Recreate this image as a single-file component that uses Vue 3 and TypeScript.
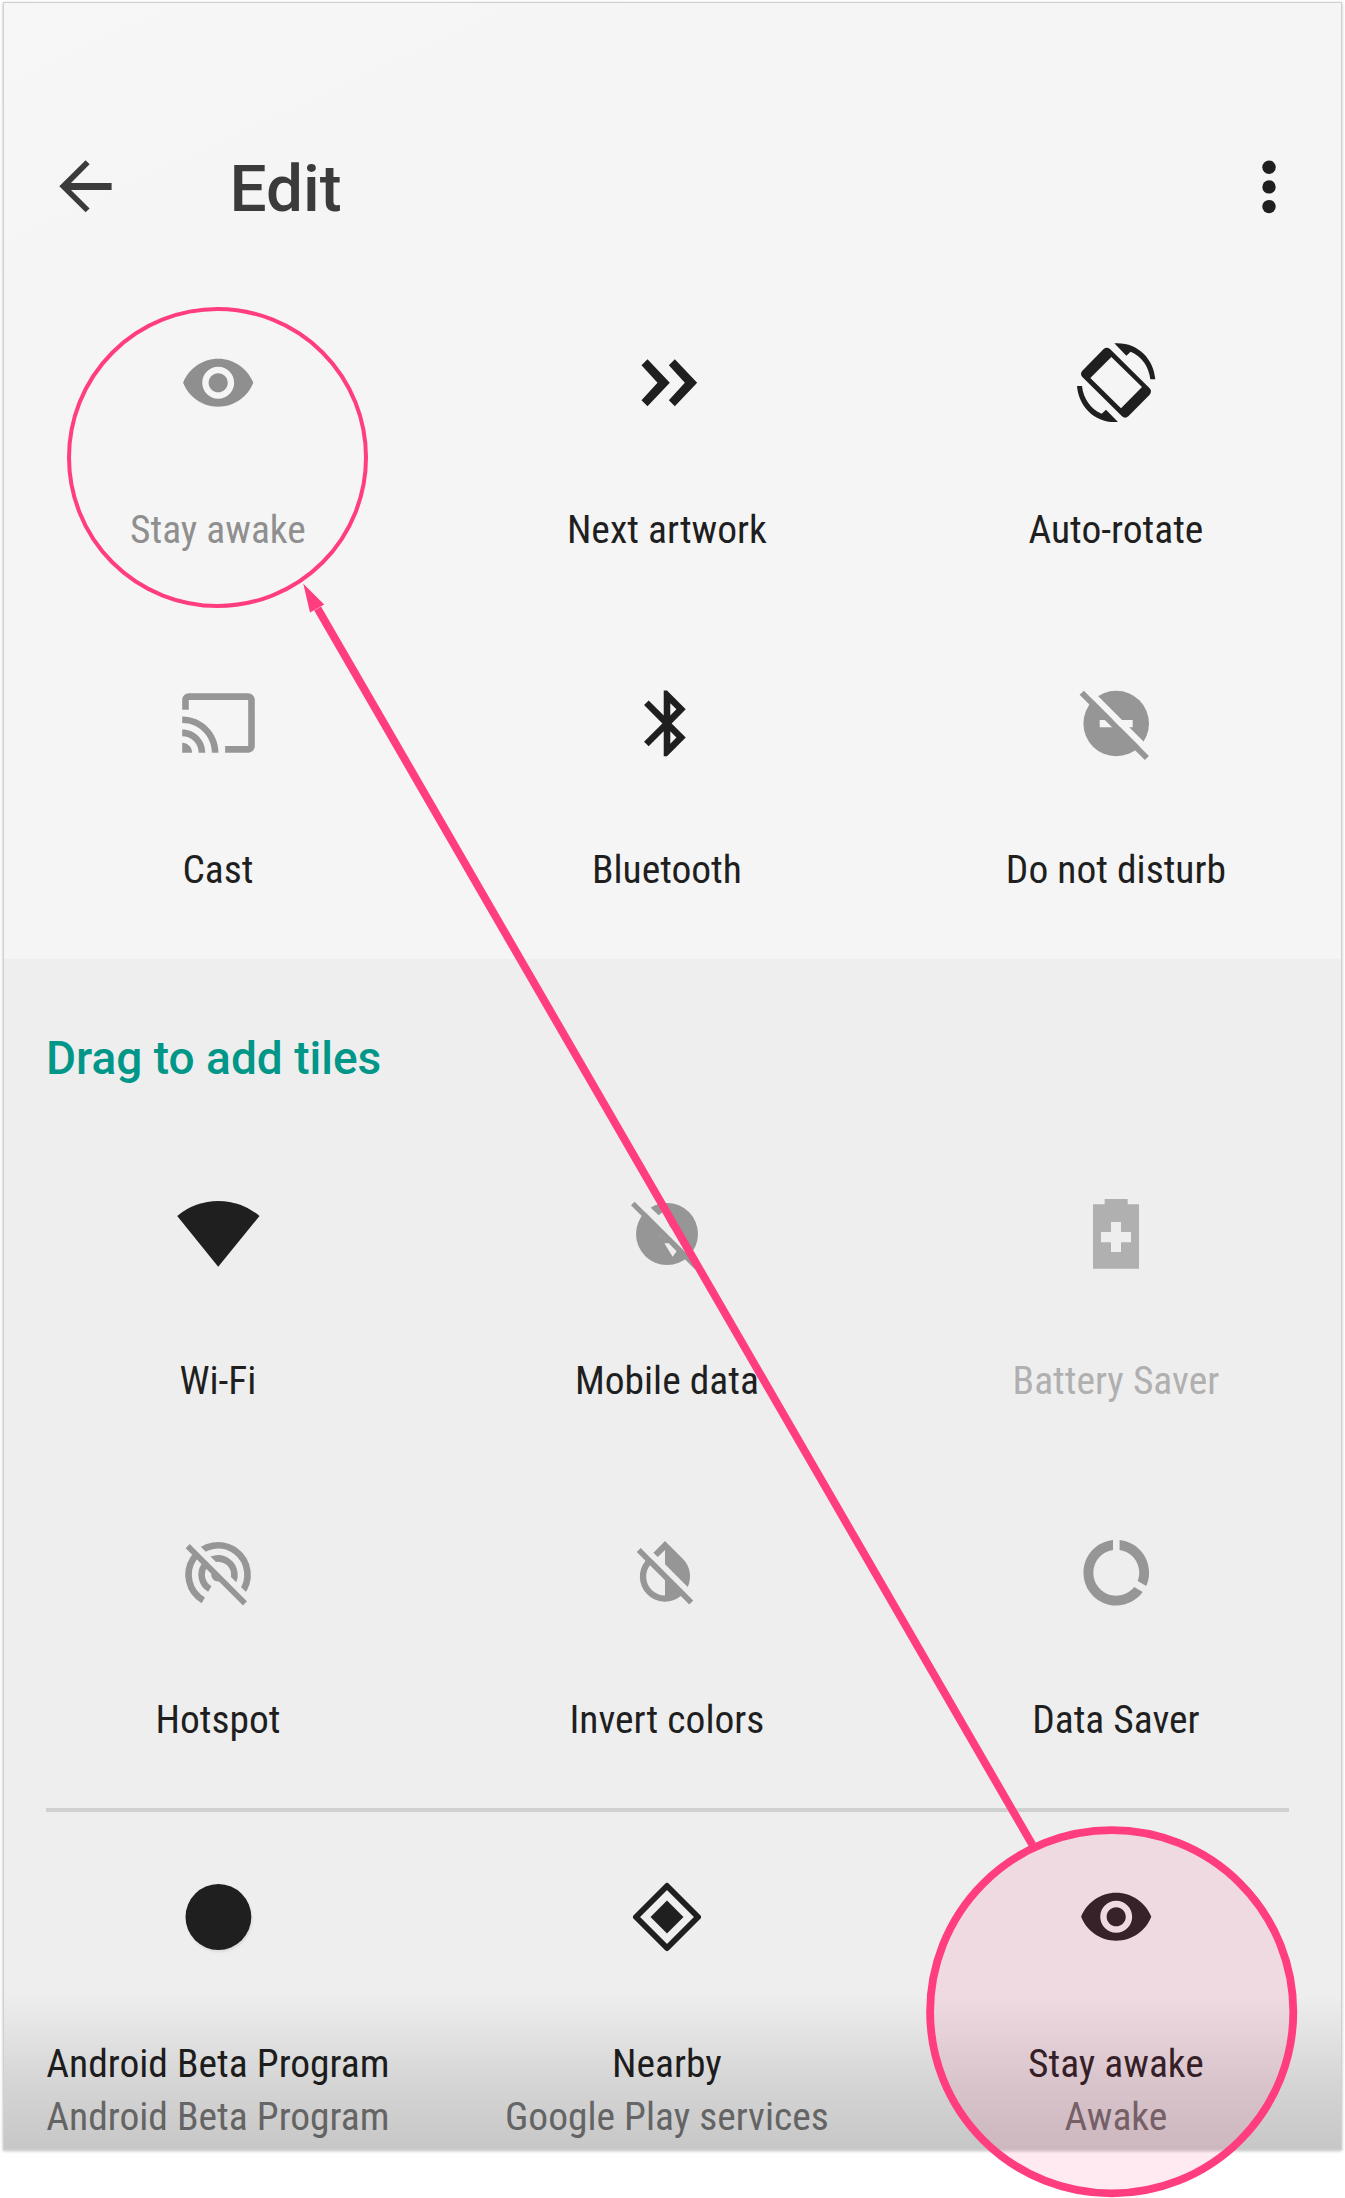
<script setup lang="ts">
interface Tile {
  label: string
  icon: string
  sub?: string
  tone?: 'off' | 'disabled' | 'muted'
}

const activeTiles: Tile[] = [
  { label: 'Stay awake', icon: 'eye', tone: 'muted' },
  { label: 'Next artwork', icon: 'next' },
  { label: 'Auto-rotate', icon: 'rotate' },
  { label: 'Cast', icon: 'cast', tone: 'off' },
  { label: 'Bluetooth', icon: 'bluetooth' },
  { label: 'Do not disturb', icon: 'dnd', tone: 'off' },
]

const systemTiles: Tile[] = [
  { label: 'Wi-Fi', icon: 'wifi' },
  { label: 'Mobile data', icon: 'mobile', tone: 'off' },
  { label: 'Battery Saver', icon: 'battery', tone: 'disabled' },
  { label: 'Hotspot', icon: 'hotspot', tone: 'off' },
  { label: 'Invert colors', icon: 'invert', tone: 'off' },
  { label: 'Data Saver', icon: 'data', tone: 'off' },
]

const appTiles: Tile[] = [
  { label: 'Android Beta Program', icon: 'dot', sub: 'Android Beta Program' },
  { label: 'Nearby', icon: 'nearby', sub: 'Google Play services' },
  { label: 'Stay awake', icon: 'eye', sub: 'Awake' },
]

const groups = [
  { name: 'active', tiles: activeTiles },
  { name: 'system', tiles: systemTiles },
  { name: 'apps', tiles: appTiles },
]
</script>

<template>
  <div class="page">
    <main class="panel">
      <header class="bar">
        <svg class="back" viewBox="0 0 53 53">
          <path d="M0.3 26.3 26.6 .3 30.6 4.3 12 23H52.6V30H12L30.6 48.4 26.6 52.3Z" />
        </svg>
        <h1 class="title">Edit</h1>
        <svg class="more" viewBox="0 0 14 54">
          <circle cx="7" cy="7.2" r="6.7" />
          <circle cx="7" cy="26.9" r="6.7" />
          <circle cx="7" cy="46.6" r="6.7" />
        </svg>
      </header>

      <template v-for="group in groups" :key="group.name">
        <h2 v-if="group.name === 'system'" class="heading">Drag to add tiles</h2>
        <div v-if="group.name === 'apps'" class="divider"></div>
        <section class="grid" :class="group.name">
          <div v-for="tile in group.tiles" :key="tile.label" class="tile" :class="tile.tone">
            <svg class="icon" viewBox="-40 -40 80 80">
              <g v-if="tile.icon === 'eye'" transform="translate(.2 -.3) scale(3.19) translate(-12 -12)">
                <path d="M12 4.5C7 4.5 2.73 7.61 1 12c1.73 4.39 6 7.5 11 7.5s9.27-3.11 11-7.5c-1.73-4.39-6-7.5-11-7.5zM12 17c-2.76 0-5-2.24-5-5s2.24-5 5-5 5 2.24 5 5-2.24 5-5 5zm0-8c-1.66 0-3 1.34-3 3s1.34 3 3 3 3-1.34 3-3-1.34-3-3-3z" />
              </g>
              <g v-else-if="tile.icon === 'next'" transform="translate(.5 0) scale(.33333) translate(-381 -189)">
                <path d="M321 118 388 188 321 259 303 241 351 188 303 136Z" />
                <path d="M403 118 470 188 403 259 385 241 433 188 385 136Z" />
              </g>
              <g v-else-if="tile.icon === 'rotate'" transform="scale(.33333) translate(-409 -789)">
                <path fill-rule="evenodd" d="M372 687Q381 679 391 687L510 805Q518 814 510 824L446 889Q437 897 427 889L308 771Q300 761 308 752ZM395 711 332 774 424 865 487 801Z" />
                <path d="M404 670C472 665 522 715 527 778H512C508 740 486 709 453 695L440 707Z" />
                <path transform="rotate(180 409.5 788)" d="M404 670C472 665 522 715 527 778H512C508 740 486 709 453 695L440 707Z" />
              </g>
              <g v-else-if="tile.icon === 'cast'" transform="translate(.5 0) scale(3.3) translate(-12 -12)">
                <path d="M21 3H3c-1.1 0-2 .9-2 2v3h2V5h18v14h-7v2h7c1.1 0 2-.9 2-2V5c0-1.1-.9-2-2-2zM1 18v3h3c0-1.66-1.34-3-3-3zm0-4v2c2.76 0 5 2.24 5 5h2c0-3.87-3.13-7-7-7zm0-4v2c4.97 0 9 4.03 9 9h2c0-6.08-4.93-11-11-11z" />
              </g>
              <g v-else-if="tile.icon === 'bluetooth'" transform="translate(0 .4) scale(3.28) translate(-12 -12)">
                <path d="M17.71 7.71L12 2h-1v7.59L6.41 5 5 6.41 10.59 12 5 17.59 6.41 19 11 14.41V22h1l5.71-5.71-4.3-4.29 4.3-4.29zM13 5.83l1.88 1.88L13 9.59V5.83zm1.88 10.46L13 18.17v-3.76l1.88 1.88z" />
              </g>
              <g v-else-if="tile.icon === 'dnd'">
                <mask id="dnd-cut" maskUnits="userSpaceOnUse" x="-40" y="-40" width="80" height="80">
                  <rect x="-40" y="-40" width="80" height="80" fill="#fff" />
                  <path fill="#000" d="M-40 -49 40 31V40L-40 -40ZM-16.3 -3H16.7V4.3H-16.3Z" />
                </mask>
                <circle mask="url(#dnd-cut)" cx=".2" cy=".5" r="32.8" />
                <path d="M-36.4 -28.3-32.1 -32.3 32.9 32.9 28.8 37Z" />
              </g>
              <g v-else-if="tile.icon === 'wifi'" transform="translate(.2 0) scale(.33333) translate(-654 -912)">
                <path d="M531 858A192 192 0 0 1 778 858L654 1010Z" />
              </g>
              <g v-else-if="tile.icon === 'mobile'" transform="scale(.33333) translate(-321 -192)">
                <mask id="mobile-cut" maskUnits="userSpaceOnUse" x="200" y="70" width="240" height="240">
                  <rect x="200" y="70" width="240" height="240" fill="#fff" />
                  <path fill="#000" d="M224 68 296 136 308 126 330 170 420 262V291L224 95ZM300 194 304 201 297 201ZM313 220H327L350 244 338 260Z" />
                </mask>
                <g mask="url(#mobile-cut)">
                  <circle cx="321" cy="192" r="93" />
                </g>
                <path fill-rule="evenodd" d="M213 106 224 95 415 286 404 297ZM296 196H302L304 201H298Z" />
              </g>
              <g v-else-if="tile.icon === 'battery'" transform="scale(.33333) translate(-409 -192)">
                <path fill-rule="evenodd" d="M375 87H444V103H478V296H340V103H375ZM394 156V186H364V217H394V246H424V217H454V186H424V156Z" />
              </g>
              <g v-else-if="tile.icon === 'hotspot'">
                <mask id="hotspot-cut" maskUnits="userSpaceOnUse" x="-40" y="-40" width="80" height="80">
                  <rect x="-40" y="-40" width="80" height="80" fill="#fff" />
                  <path fill="#000" d="M-40 -49 40 31V40L-40 -40Z" />
                </mask>
                <g mask="url(#hotspot-cut)">
                  <path class="line" d="M-14.75 27.3A29.5 29.5 0 1 1 22.6 20.8M-8.2 16A16.4 16.4 0 1 1 12.6 12.3" />
                  <circle cx="0" cy="1.8" r="6.8" />
                </g>
                <path d="M-32.3 -24.7-28.3 -28.9 28.9 28.3 25 32.6Z" />
              </g>
              <g v-else-if="tile.icon === 'invert'" transform="translate(-2 -1.4) scale(3.14) translate(-12 -12)">
                <path d="M20.65 20.87l-2.35-2.35-6.3-6.29-3.56-3.57-1.42-1.41L4.27 4.5 3 5.77l2.78 2.78c-2.55 3.14-2.36 7.76.56 10.69C7.9 20.8 9.95 21.58 12 21.58c1.79 0 3.57-.59 5.03-1.78l2.7 2.7L21 21.23l-.35-.36zM12 19.59c-1.6 0-3.11-.62-4.24-1.76C6.62 16.69 6 15.19 6 13.59c0-1.32.43-2.57 1.21-3.6L12 14.77v4.82zM12 5.1v4.58l7.25 7.26c1.37-2.96.84-6.57-1.6-9.01L12 2.27l-3.7 3.7 1.41 1.41L12 5.1z" />
              </g>
              <g v-else-if="tile.icon === 'data'" transform="translate(.3 -.3) scale(3.28) translate(-12 -12)">
                <path d="M13 2.05v3.03c3.39.49 6 3.39 6 6.92 0 .9-.18 1.75-.48 2.54l2.6 1.53c.56-1.24.88-2.62.88-4.07 0-5.18-3.95-9.45-9-9.95zM12 19c-3.87 0-7-3.13-7-7 0-3.53 2.61-6.43 6-6.92V2.05c-5.06.5-9 4.76-9 9.95 0 5.52 4.47 10 9.99 10 3.31 0 6.24-1.61 8.06-4.09l-2.6-1.53C16.17 17.98 14.21 19 12 19z" />
              </g>
              <circle v-else-if="tile.icon === 'dot'" class="disc" cx=".4" cy="0" r="32.9" />
              <g v-else-if="tile.icon === 'nearby'">
                <path class="frame" d="M0 -31 31 0 0 31 -31 0Z" />
                <path d="M0 -16.5 16.5 0 0 16.5 -16.5 0Z" />
              </g>
            </svg>
            <span class="label">{{ tile.label }}</span>
            <span v-if="tile.sub" class="sub">{{ tile.sub }}</span>
          </div>
        </section>
      </template>
    </main>

    <svg class="notes" viewBox="0 0 1345 2198">
      <circle class="ring-small" cx="217.5" cy="457.5" r="148.5" />
      <path class="shaft" d="M317.6 608.5 1032.5 1845" />
      <path class="head" d="M303.3 583.7 324.2 604.4 310 612.4Z" />
      <circle class="ring-large" cx="1111.7" cy="2011.8" r="181.6" />
    </svg>
  </div>
</template>

<style>
body {
  margin: 0;
  background: #fff;
}
</style>

<style scoped>
.page {
  position: relative;
  width: 1345px;
  height: 2198px;
  padding: 3px 4px 0;
  box-sizing: border-box;
  overflow: hidden;
  font-family: Roboto, "Liberation Sans", sans-serif;
}
.panel {
  position: relative;
  height: 2146px;
  overflow: hidden;
  color: #1f1f1f;
  background: linear-gradient(155deg, #f7f7f7 0, #f5f5f5 20%, #f5f5f5 100%) 0 0 / 100% 956px no-repeat, #eee;
  box-shadow: 0 0 0 1px #d0d0d0, 0 1px 3px 1px rgba(0, 0, 0, .26);
}
.panel::after {
  content: "";
  position: absolute;
  inset: auto 0 0;
  height: 155px;
  background: linear-gradient(rgba(0, 0, 0, 0), rgba(0, 0, 0, .1) 55%, rgba(0, 0, 0, .165));
}
.bar {
  display: flex;
  align-items: flex-start;
  height: 340px;
  padding: 27px 65px 0 55px;
  box-sizing: border-box;
}
.back {
  width: 53px;
  height: 53px;
  margin-top: 130px;
  fill: #3b3b3b;
}
.title {
  margin: 121px 0 0 117.5px;
  font-size: 65.7px;
  line-height: 76px;
  font-weight: 500;
  color: #3b3b3b;
}
.more {
  width: 14px;
  height: 54px;
  margin: 129.5px 0 0 auto;
  fill: #1f1f1f;
}
.heading {
  margin: 71px 0 0 42px;
  font-size: 46px;
  line-height: 56px;
  font-weight: 500;
  color: #009688;
}
.grid {
  display: grid;
  grid-template-columns: repeat(3, 449px);
  margin-left: -10.6px;
}
.active {
  grid-auto-rows: 340px;
  height: 616px;
}
.system {
  grid-auto-rows: 339px;
  height: 614px;
  margin-top: 108px;
}
.divider {
  width: 1243px;
  height: 4px;
  margin: 0 0 65px 42px;
  background: #d0d0d0;
}
.tile {
  display: flex;
  flex-direction: column;
  align-items: center;
}
.icon {
  flex: none;
  width: 80px;
  height: 80px;
  margin-bottom: 84px;
  overflow: visible;
  fill: currentColor;
}
.label,
.sub {
  font-family: "Roboto Condensed", Roboto, "Liberation Sans Narrow", sans-serif;
  font-stretch: 75%;
  font-size: 39.5px;
  line-height: 46px;
  white-space: nowrap;
}
.sub {
  margin-top: 7px;
  color: #747474;
}
.off .icon {
  color: #969696;
}
.muted {
  color: #8f8f8f;
}
.disabled {
  color: #b0b0b0;
}
.line {
  fill: none;
  stroke: currentColor;
  stroke-width: 6.6;
}
.disc {
  filter: drop-shadow(1px 2px 1px rgba(0, 0, 0, .08));
}
.frame {
  fill: none;
  stroke: currentColor;
  stroke-width: 5.9;
  stroke-linejoin: round;
}
.notes {
  position: absolute;
  left: 0;
  top: 0;
  width: 1345px;
  height: 2198px;
}
.notes circle,
.shaft {
  fill: none;
  stroke: #ff3d7f;
}
.notes .ring-small {
  stroke-width: 4;
}
.shaft {
  stroke-width: 7.9;
}
.head {
  fill: #ff3d7f;
}
.notes .ring-large {
  fill: rgba(255, 61, 127, .11);
  stroke-width: 7.8;
}
</style>
